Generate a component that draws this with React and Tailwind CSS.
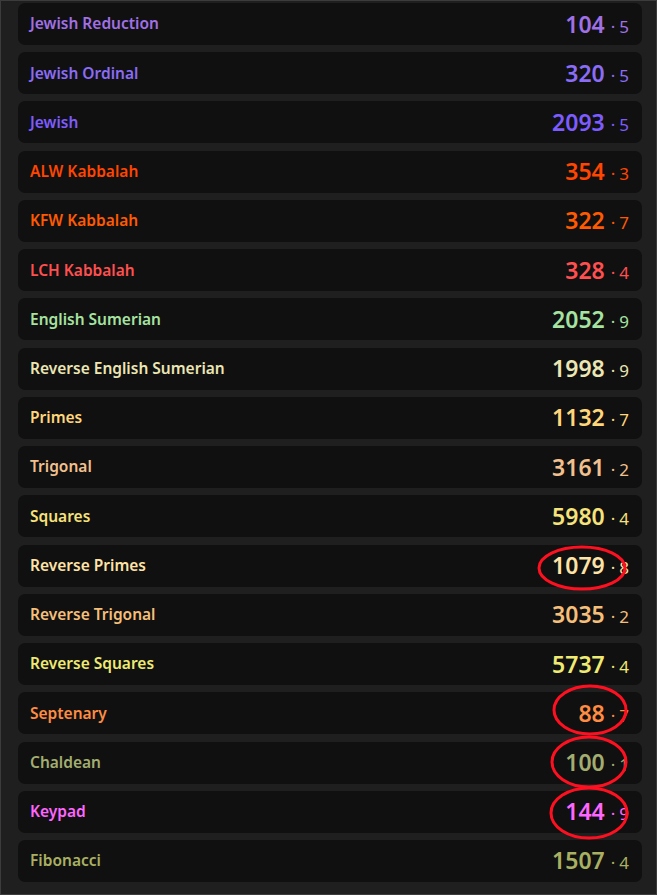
import React from 'react';

const rows = [
  { name: 'Jewish Reduction', value: 104, root: 5, color: 'text-[#a070e6]' },
  { name: 'Jewish Ordinal', value: 320, root: 5, color: 'text-[#8a6cf6]' },
  { name: 'Jewish', value: 2093, root: 5, color: 'text-[#7d5cff]' },
  { name: 'ALW Kabbalah', value: 354, root: 3, color: 'text-[#ff4500]' },
  { name: 'KFW Kabbalah', value: 322, root: 7, color: 'text-[#ff5a00]' },
  { name: 'LCH Kabbalah', value: 328, root: 4, color: 'text-[#ff4f4f]' },
  { name: 'English Sumerian', value: 2052, root: 9, color: 'text-[#a6e3a1]' },
  { name: 'Reverse English Sumerian', value: 1998, root: 9, color: 'text-[#ebe6b4]' },
  { name: 'Primes', value: 1132, root: 7, color: 'text-[#ffd77a]' },
  { name: 'Trigonal', value: 3161, root: 2, color: 'text-[#f2c08e]' },
  { name: 'Squares', value: 5980, root: 4, color: 'text-[#f6e27a]' },
  { name: 'Reverse Primes', value: 1079, root: 8, color: 'text-[#ffe3a6]' },
  { name: 'Reverse Trigonal', value: 3035, root: 2, color: 'text-[#f5bf7a]' },
  { name: 'Reverse Squares', value: 5737, root: 4, color: 'text-[#eeea72]' },
  { name: 'Septenary', value: 88, root: 7, color: 'text-[#ff8c42]' },
  { name: 'Chaldean', value: 100, root: 1, color: 'text-[#a3ad70]' },
  { name: 'Keypad', value: 144, root: 9, color: 'text-[#ff66ff]' },
  { name: 'Fibonacci', value: 1507, root: 4, color: 'text-[#aab062]' },
];

// red marker rings drawn over the screenshot
const marks = [
  { cx: 581, cy: 567, rx: 43, ry: 21 },
  { cx: 589, cy: 709, rx: 36, ry: 24 },
  { cx: 588, cy: 761, rx: 37, ry: 25 },
  { cx: 588, cy: 812, rx: 38, ry: 25 },
];

const Row = ({ row }) => (
  <div className={`h-[42px] shrink-0 rounded-[7px] bg-[#101010] flex items-center justify-between pl-[12px] pr-[13px] ${row.color}`}>
    <span className="text-[15.5px] font-semibold">{row.name}</span>
    <span className="flex items-baseline">
      <span className="text-[23px] font-semibold leading-none">{row.value}</span>
      <span className="text-[17px] leading-none ml-[6px]">·</span>
      <span className="text-[17px] leading-none ml-[4px]">{row.root}</span>
    </span>
  </div>
);

export default function App() {
  return (
    <div
      className="relative w-[657px] h-[895px] bg-[#1f1f1f] border border-[#3c3c3c] overflow-hidden"
      style={{ fontFamily: '"Noto Sans", "Open Sans", sans-serif' }}
    >
      <div className="flex flex-col gap-[7.24px] pt-[2px] pl-[17px] pr-[14px]">
        {rows.map((row) => (
          <Row key={row.name} row={row} />
        ))}
      </div>
      <svg className="absolute left-0 top-0 pointer-events-none" width="657" height="895">
        {marks.map((m, i) => (
          <ellipse key={i} cx={m.cx} cy={m.cy} rx={m.rx} ry={m.ry} fill="none" stroke="#ff1020" strokeWidth="3" />
        ))}
      </svg>
    </div>
  );
}
